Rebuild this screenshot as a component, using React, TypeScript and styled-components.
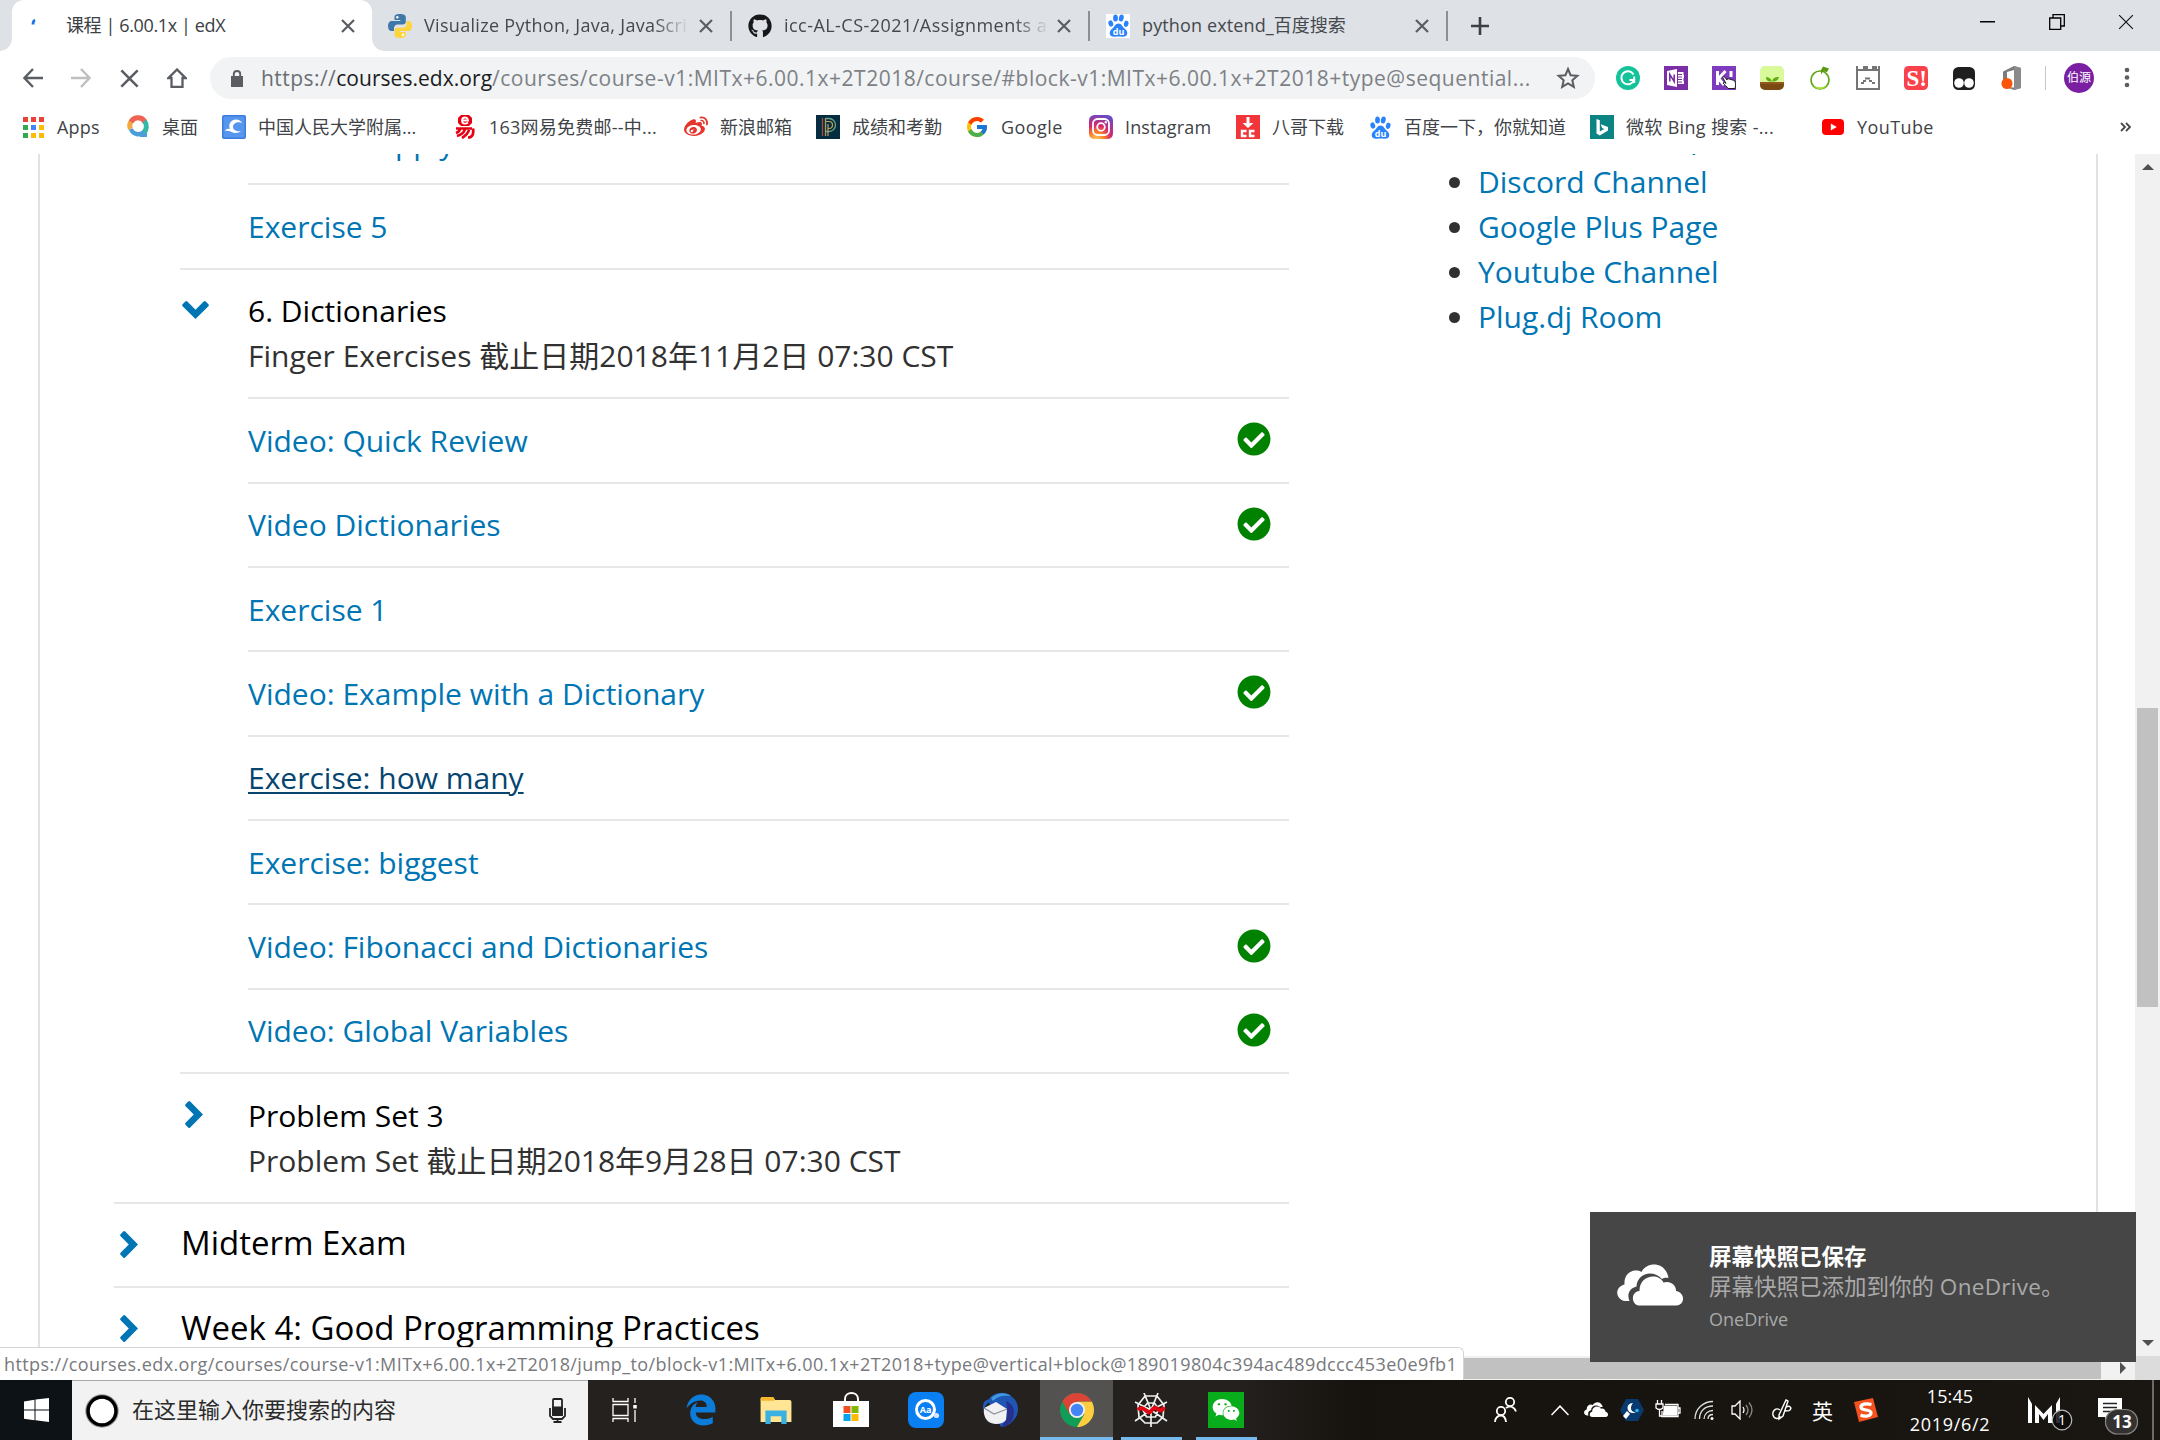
import React from "react";
import styled, { createGlobalStyle, css } from "styled-components";
import { FaCheckCircle, FaEdgeLegacy, FaGithub, FaWeibo, FaWeixin } from "react-icons/fa";
import { FcGoogle } from "react-icons/fc";

const Global = createGlobalStyle`
  * { box-sizing: border-box; }
  html, body { margin: 0; padding: 0; }
  body { width: 2160px; height: 1440px; overflow: hidden; background: #fff;
    font-family: "Open Sans", "Noto Sans CJK SC", sans-serif; }
  svg { display: block; flex: none; }
`;

const T = styled.span<{ $s?: number; $ls?: number; $c?: string; $b?: boolean }>`
  font-size: ${(p) => p.$s ?? 18}px;
  letter-spacing: ${(p) => p.$ls ?? 0}px;
  color: ${(p) => p.$c ?? "inherit"};
  font-weight: ${(p) => (p.$b ? 700 : 400)};
  white-space: pre;
`;

/* ---------- window frame ---------- */
const Screen = styled.div`
  width: 2160px; height: 1440px; display: flex; flex-direction: column; overflow: hidden; position: relative;
`;
const TabStrip = styled.div`
  height: 51px; flex: none; background: #dee1e6; display: flex; align-items: stretch; padding-left: 12px;
`;
const Tab = styled.div<{ $active?: boolean; $w: number }>`
  width: ${(p) => p.$w}px; height: 51px; display: flex; align-items: center; padding: 0 17px 0 16px; color: #45494d;
  position: relative;
  ${(p) => p.$active && css`
    background: #fff; border-radius: 12px 12px 0 0; color: #3c4043;
    &::before, &::after { content: ""; position: absolute; bottom: 0; width: 12px; height: 12px; }
    &::before { left: -12px; background: radial-gradient(circle at 0 0, #dee1e6 11.5px, #fff 12px); }
    &::after { right: -12px; background: radial-gradient(circle at 100% 0, #dee1e6 11.5px, #fff 12px); }
  `}
`;
const TabTitle = styled.div<{ $w: number; $fade?: boolean; $gap?: number }>`
  width: ${(p) => p.$w}px; margin-left: ${(p) => p.$gap ?? 12}px; overflow: hidden; white-space: nowrap; line-height: 30px;
  ${(p) => p.$fade && css`mask-image: linear-gradient(to right, #000 calc(100% - 34px), transparent);`}
`;
const TabDivider = styled.i`width: 2px; height: 30px; margin-top: 11px; background: #8c9095; flex: none;`;
const Push = styled.div`flex: 1;`;
const FavBox = styled.div<{ $bg?: string }>`
  width: 24px; height: 24px; flex: none; display: flex; align-items: center; justify-content: center;
  background: ${(p) => p.$bg ?? "transparent"};
`;
const NewTab = styled.div`width: 64px; display: flex; align-items: center; justify-content: center;`;
const Controls = styled.div`margin-left: auto; display: flex;`;
const Control = styled.div<{ $w: number }>`width: ${(p) => p.$w}px; height: 43px; display: flex; align-items: center; justify-content: center;`;

const Toolbar = styled.div`height: 54px; flex: none; display: flex; align-items: center; background: #fff; padding-left: 9px;`;
const NavBtn = styled.div`width: 48px; display: flex; justify-content: center; align-items: center;`;
const Omnibox = styled.div`
  margin-left: 9px; width: 1385px; height: 42px; border-radius: 21px; background: #f1f3f4;
  display: flex; align-items: center; padding: 0 15px 0 21px;
`;
const Url = styled.div`margin-left: 18px; line-height: 42px; height: 42px; white-space: nowrap; flex: 1;`;
const ExtRow = styled.div`display: flex; margin-left: 9px;`;
const Ext = styled.div`width: 48px; display: flex; justify-content: center;`;
const VLine = styled.i`width: 1px; height: 24px; background: #c6c9cd; margin-left: 9px;`;
const Avatar = styled.div`
  margin-left: 18px; width: 30px; height: 30px; border-radius: 50%; background: #7b1fa2; color: #fff;
  display: flex; align-items: center; justify-content: center; line-height: 1;
`;
const Menu = styled.div`margin-left: 30px; width: 6px;`;

const Bookmarks = styled.div`height: 49px; flex: none; display: flex; padding: 0 0 5px 21px; background: #fff; align-items: center; color: #404347;`;
const Bookmark = styled.div<{ $w: number }>`width: ${(p) => p.$w}px; display: flex; align-items: center; gap: 12px; white-space: nowrap; line-height: 26px;`;
const More = styled.div`margin-left: auto; padding-right: 29px;`;

/* ---------- page ---------- */
const PageRow = styled.div`height: 1202px; flex: none; display: flex; background: #fff; overflow: hidden;`;
const Page = styled.main`
  width: 2060px; margin-left: 38px; border: solid #e2e2e2; border-width: 0 2px; display: flex; align-items: flex-start; height: 1202px; overflow: hidden;
`;
const Outline = styled.ol`
  list-style: none; margin: -55px 0 0 74px; padding: 0; width: 1175px; font-size: 30px; line-height: 45px;
`;
const Line = styled.li<{ $indent: number }>`
  margin-left: ${(p) => p.$indent}px; border-top: 2px solid #e7e7e7; padding: 18.7px 18px 18.7px 0;
  display: flex; align-items: flex-start; justify-content: space-between;
`;
const Link = styled.a<{ $hover?: boolean }>`
  color: ${(p) => (p.$hover ? "#064570" : "#0075b4")}; white-space: nowrap; height: 45px;
  ${(p) => p.$hover && css`text-decoration: underline; text-decoration-thickness: 2px; text-underline-offset: 3px;`}
`;
const Twisty = styled.div<{ $w: number; $pad: number }>`
  width: ${(p) => p.$w}px; height: 44px; display: flex; align-items: center; padding-left: ${(p) => p.$pad}px; flex: none;
`;
const Heading = styled.div`flex: 1; white-space: nowrap;`;
const Title = styled.div`color: #000; height: 45px;`;
const WeekTitle = styled.div`color: #000; height: 45px; font-size: 33px; line-height: 41px;`;
const Due = styled.div`color: #313131; height: 45px;`;
const Done = styled.div`width: 34px; height: 43px; display: flex; align-items: center; font-size: 34px; color: #008100;`;

const Side = styled.ul`
  margin: -40px 0 0 160px; padding: 0; list-style: none; font-size: 30px; line-height: 45px;
`;
const SideItem = styled.li`display: flex; align-items: center; gap: 18px; height: 45px;
  &::before { content: ""; width: 11px; height: 11px; border-radius: 50%; background: #313131; margin-top: 2px; }
`;

const VScroll = styled.div`width: 25px; height: 1202px; margin-left: auto; background: #f1f1f1; display: flex; flex-direction: column; align-items: center;`;
const Arrow = styled.div<{ $dir: "up" | "down" | "right" }>`
  width: 0; height: 0; border: 6px solid transparent;
  ${(p) => p.$dir === "up" && css`border-bottom-color: #505050; border-top: 0; margin-top: 10px;`}
  ${(p) => p.$dir === "down" && css`border-top-color: #505050; border-bottom: 0; margin-top: auto; margin-bottom: 10px;`}
  ${(p) => p.$dir === "right" && css`border-left-color: #505050; border-right: 0;`}
`;
const VThumb = styled.div`width: 21px; height: 299px; background: #c1c1c1; margin-top: 538px;`;
const HScroll = styled.div`height: 24px; flex: none; display: flex; background: #f1f1f1;`;
const HThumb = styled.div`margin: 2px 0 1px 26px; width: 2075px; background: #c1c1c1;`;
const HEnd = styled.div`width: 34px; display: flex; align-items: center; padding-left: 19px;`;
const Corner = styled.div`width: 25px; background: #dcdcdc;`;

const StatusBubble = styled.div`
  position: absolute; left: 0; top: 1347px; width: 1464px; height: 33px; background: #fff; border: 1px solid #d4d4d4;
  border-left: 0; border-bottom: 0; border-top-right-radius: 6px; padding-left: 4px; line-height: 32px; color: #77797c; white-space: nowrap;
`;
const Toast = styled.div`
  position: absolute; left: 1590px; top: 1212px; width: 546px; height: 150px; background: #464646; display: flex; padding-left: 27px;
`;
const ToastIcon = styled.div`width: 66px; padding-top: 52px; margin-right: 26px;`;
const ToastText = styled.div`display: flex; flex-direction: column; padding-top: 30px; white-space: nowrap; color: #a9a9a9;`;
const ToastLine = styled.div<{ $h: number }>`height: ${(p) => p.$h}px; line-height: ${(p) => p.$h}px;`;

/* ---------- taskbar ---------- */
const Taskbar = styled.div`height: 60px; flex: none; display: flex; background: linear-gradient(to right, #25211e 0, #25211e 57%, #16130f 63%, #1a1713 100%); color: #fff;`;
const Start = styled.div`width: 72px; background: #0c1216; display: flex; align-items: center; justify-content: center;`;
const Search = styled.div`width: 516px; background: #f2f2f2; border-top: 1px solid #a9a9a9; display: flex; align-items: center; padding: 0 22px 0 13px; color: #2b2b2b;`;
const SearchText = styled.div`margin-left: 13px; flex: 1; line-height: 58px;`;
const TaskBtn = styled.div<{ $w: number; $on?: boolean; $run?: number }>`
  width: ${(p) => p.$w}px; display: flex; align-items: center; justify-content: center; position: relative;
  background: ${(p) => (p.$on ? "#545250" : "transparent")};
  ${(p) => p.$run && css`&::after { content: ""; position: absolute; bottom: 0; left: calc(50% - ${p.$run / 2}px); width: ${p.$run}px; height: 3px; background: #76b9ed; }`}
`;
const Tray = styled.div`margin-left: auto; display: flex;`;
const Cell = styled.div<{ $w: number }>`width: ${(p) => p.$w}px; display: flex; align-items: center; justify-content: center;`;
const Clock = styled.div`width: 120px; display: flex; flex-direction: column; align-items: center; padding-top: 2px; line-height: 28px;`;
const ShowDesktop = styled.div`width: 8px; border-left: 2px solid #6c6a68;`;

/* ---------- icons ---------- */
const Close = ({ s = 14, w = 2.2, c = "#5a5e62" }: { s?: number; w?: number; c?: string }) => (
  <svg width={s} height={s} viewBox="0 0 14 14" stroke={c} strokeWidth={w} fill="none"><path d="M1 1l12 12M13 1L1 13" /></svg>
);
const Python = () => (
  <svg width="24" height="24" viewBox="0 0 24 24">
    <path fill="#3f78a8" d="M12 0C8 0 6.500 1 6.500 3.300V6H12.300v1H3.800C1.300 7 0 9 0 12s1.300 5 3.500 5H6v-3c0-2 1.600-3.600 3.600-3.600h5.200c1.800 0 3-1.300 3-3V3.300C17.800 1 15.500 0 12 0z" />
    <path fill="#fdd43b" d="M12 24c4 0 5.600-1 5.600-3.300V18h-5.900v-1h8.500c2.500 0 3.800-2 3.800-5s-1.300-5-3.500-5h-2v3c0 2-1.600 3.700-3.600 3.700H9.600c-1.800 0-3 1.300-3 3v4C6.600 23 8.500 24 12 24z" />
    <circle cx="9.300" cy="3.300" r="1.200" fill="#fff" /><circle cx="15" cy="20.700" r="1.200" fill="#fff" />
  </svg>
);
const Baidu = () => (
  <svg width="21" height="23" viewBox="0 0 21 23" fill="#2b83fb">
    <ellipse cx="2.800" cy="9.500" rx="2.400" ry="3.200" transform="rotate(-15 2.800 9.500)" />
    <ellipse cx="7.500" cy="4" rx="2.400" ry="3.500" /><ellipse cx="13.300" cy="4" rx="2.400" ry="3.500" transform="rotate(12 13.300 4)" />
    <ellipse cx="18.200" cy="9.800" rx="2.300" ry="3.200" transform="rotate(12 18.200 9.800)" />
    <path d="M10.500 9.500c3 0 4 3 5.500 4.500s3.500 2.800 3.300 5.300c-.3 3-2.500 3.700-5 3.500-1.500-.1-2.500-.3-3.800-.3s-2.300.2-3.800.3c-2.500.2-4.700-.5-5-3.500-.2-2.500 1.800-3.800 3.300-5.300s2.500-4.500 5.500-4.500z" />
    <text x="10.500" y="21" fontSize="9" fontWeight="700" textAnchor="middle" fill="#fff" fontFamily="Open Sans">du</text>
  </svg>
);
const AppsGrid = () => {
  const c = ["#ea4335", "#ea4335", "#ea4335", "#34a853", "#4285f4", "#fbbc05", "#34a853", "#fbbc05", "#fbbc05"];
  return <svg width="24" height="24" viewBox="0 0 24 24">{c.map((f, i) => <rect key={i} x={2 + (i % 3) * 8} y={2 + Math.floor(i / 3) * 8} width="5" height="5" fill={f} />)}</svg>;
};
const Desk = () => (
  <svg width="24" height="24" viewBox="0 0 24 24" fill="none">
    <path d="M4.500 14a8 8 0 0 1 2-9" stroke="#f5a742" strokeWidth="5" /><path d="M5 7a8 8 0 0 1 14 0" stroke="#ef6352" strokeWidth="5" />
    <path d="M18.500 6a9 9 0 0 1-1 12" stroke="#35b8a6" strokeWidth="5" /><path d="M18 17a8 8 0 0 1-13-3" stroke="#4a9fd8" strokeWidth="4.500" /><path d="M14 18h7v4h-7z" fill="#4a9fd8" />
    <path d="M8 8l7 7M15 8l-7 7" stroke="#fff" strokeWidth="3.500" />
  </svg>
);
const School = () => (
  <svg width="24" height="24" viewBox="0 0 24 24"><rect width="24" height="24" rx="2" fill="#3b7dde" /><rect x="1.500" y="1.500" width="21" height="21" rx="1" fill="#5796ee" />
    <path d="M20 8c-3-5-10-4-12 0-1 2-1 4 0 6-3-.5-4 0-5 2 5-1 6 2 10 2 3 0 5-1 6-2-4 1-8-1-8-4 0-4 5-6 9-4z" fill="#fff" /></svg>
);
const NetEase = () => (
  <svg width="24" height="24" viewBox="0 0 24 24" fill="none" stroke="#e60012" strokeWidth="2">
    <path d="M8 0h8l3 3v5l-3 3H8L5 8V3z" fill="#e60012" stroke="none" /><path d="M9 5.500h6c0-4-6-4-6 0s4 3.500 6 2" stroke="#fff" strokeWidth="1.800" />
    <path d="M3 13.500h16M7 13c0 3-1 4-4 5M12 14c-1 4-4 6-8 7M16 15c-1 4-4 6-7 8M20 13.500c1 6-1 9-5 9" strokeWidth="2.700" /></svg>
);
const PowerSchool = () => (
  <svg width="24" height="24" viewBox="0 0 24 24" fill="none"><rect width="24" height="24" fill="#062c40" /><path d="M6.500 3v18" stroke="#b3463c" strokeWidth="1.300" /><path d="M9.500 21V3" stroke="#9aa36a" strokeWidth="1.300" />
    <path d="M10 3.500h3a6 6 0 0 1 0 13h-3" stroke="#6ea58a" strokeWidth="1.300" /><path d="M10 6.500h3a3.500 3.500 0 0 1 0 7h-1M12 21V9" stroke="#c5a153" strokeWidth="1.200" /></svg>
);
const Instagram = () => (
  <svg width="24" height="24" viewBox="0 0 24 24" fill="none"><defs><radialGradient id="ig" cx=".3" cy="1.050" r="1.150"><stop offset="0" stopColor="#fed361" /><stop offset=".3" stopColor="#fa7e2b" /><stop offset=".55" stopColor="#d6276d" /><stop offset="1" stopColor="#5b4fd0" /></radialGradient></defs>
    <rect width="24" height="24" rx="5.500" fill="url(#ig)" /><rect x="4" y="4" width="16" height="16" rx="4.500" stroke="#fff" strokeWidth="1.800" /><circle cx="12" cy="12" r="3.800" stroke="#fff" strokeWidth="1.800" /><circle cx="16.800" cy="7.200" r="1.200" fill="#fff" /></svg>
);
const Bage = () => (
  <svg width="24" height="24" viewBox="0 0 24 24"><rect width="24" height="24" fill="#f2353a" /><path d="M10.500 2h3v6h4L12 13 6.500 8h4z" fill="#fff" /><path d="M10.500 16H6v5h4.500M18.500 16H14v5h4.500" stroke="#fff" strokeWidth="2.400" fill="none" /></svg>
);
const Bing = () => (
  <svg width="24" height="24" viewBox="0 0 24 24"><rect width="24" height="24" fill="#0c8484" /><path d="M6.500 4l3.300 1.200v11.300l4.500-2.600-2.200-1-1.400-3.600 7.300 2.600v3.600L9.800 20.500 6.500 18.600z" fill="#fff" /></svg>
);
const YouTube = () => (
  <svg width="24" height="24" viewBox="0 0 24 24"><rect x="1" y="4" width="22" height="16" rx="4" fill="#f00" /><path d="M9.800 8.500v7l6-3.500z" fill="#fff" /></svg>
);
const Ext1 = () => <svg width="24" height="24" viewBox="0 0 24 24" fill="none"><circle cx="12" cy="12" r="12" fill="#15c39a" /><path d="M17.500 8.500A6.500 6.500 0 1 0 18 14h-4.500M18.200 10.500V17" stroke="#fff" strokeWidth="2" /></svg>;
const Ext2 = () => <svg width="24" height="24" viewBox="0 0 24 24"><rect width="24" height="24" fill="#7b2fa6" /><path d="M3 5l10-2v18L3 19z" fill="#fff" /><path d="M14 6h6v12h-6z" fill="#fff" /><path d="M14 8.500h4M14 11h4M14 13.500h4M14 16h4M20 6v3m0 3v3" stroke="#7b2fa6" strokeWidth="1" /><path d="M5.800 15.500v-7l4.400 7v-7" stroke="#7b2fa6" strokeWidth="1.600" fill="none" /></svg>;
const Ext3 = () => <svg width="24" height="24" viewBox="0 0 24 24"><rect width="24" height="24" fill="#7f3bbd" /><path d="M5.500 5v14M13.500 5l-7 7.500L12 19M19 5v6" stroke="#fff" strokeWidth="3" fill="none" /><path d="M10.500 11c1-1 2-.5 3 1l1.500 2 .5-1.500 7 2c1 2 1.500 4 .5 8h-7c-1-2-4-4-5-5.500 1-1 2-.500 3 .5z" fill="#fff" stroke="#222" strokeWidth="1" /></svg>;
const Ext4 = () => <svg width="24" height="24" viewBox="0 0 24 24"><defs><clipPath id="e4"><rect width="24" height="24" rx="5" /></clipPath></defs><g clipPath="url(#e4)"><rect width="24" height="24" fill="#d9f99a" /><rect y="16" width="24" height="8" fill="#7a4a12" /><rect y="16" width="24" height="2" fill="#8f5a1c" /></g><path d="M12 17.500c0-3-1-6-6-6.500 0 4 3 5 6 4.500C15 15.500 18 15 19 11c-4 0-6.500 1-7 5" fill="#5fae12" /></svg>;
const Ext5 = () => <svg width="24" height="24" viewBox="0 0 24 24" fill="none"><circle cx="12" cy="14" r="9" stroke="#62a317" strokeWidth="1.700" /><path d="M5 19c4 3 10 3 14 0-2 3-4 4.300-7 4.300S7 22 5 19z" fill="#a6e03a" /><path d="M13 4l2-3.500 6 2-2 3.500-4-.500-2 3z" fill="#5a9a15" /></svg>;
const Ext6 = () => <svg width="24" height="24" viewBox="0 0 24 24" fill="none" stroke="#757575"><path d="M1 0v23h22V0M1 4h22" strokeWidth="2" /><path d="M7 1h5M16 1h5" strokeWidth="4" /><path d="M5 17h3M7 15h3M9 12.500h5M13 15h3M16 17h3" strokeWidth="2" /></svg>;
const Ext7 = () => <svg width="24" height="24" viewBox="0 0 24 24"><rect width="24" height="24" rx="4.500" fill="#f9424b" /><text x="2.500" y="20" fontSize="23" fontWeight="700" fill="#fff" fontFamily="Liberation Serif">S!</text></svg>;
const Ext8 = () => <svg width="24" height="24" viewBox="0 0 24 24"><rect x="1" y="1" width="22" height="23" rx="5.500" fill="#1f1f1f" /><circle cx="7" cy="17" r="4.800" fill="#fff" /><circle cx="17" cy="17" r="4.800" fill="#fff" /></svg>;
const Ext9 = () => <svg width="24" height="24" viewBox="0 0 24 24"><path d="M3 5.500L14 0l7 2v20l-7 2-8-3 8 .5V4L7 6v10l-4 2z" fill="#7c7c7c" /><path d="M14 0l7 2v20l-7 2z" fill="#8b8b8b" /><circle cx="7" cy="17.500" r="5.500" fill="#fb5607" /></svg>;
const EXTENSIONS = [Ext1, Ext2, Ext3, Ext4, Ext5, Ext6, Ext7, Ext8, Ext9];

const Chevron = ({ down }: { down?: boolean }) => down
  ? <svg width="27" height="18" viewBox="0 0 27 18"><path d="M13.500 18L.6 5.200q-1-1 0-2L3.300.6q1-1 2 0l8.200 8.200L21.700.6q1-1 2 0l2.700 2.600q1 1 0 2z" fill="#0075b4" /></svg>
  : <svg width="18" height="27" viewBox="0 0 18 27"><path d="M18 13.500L5.200 26.400q-1 1-2 0L.6 23.700q-1-1 0-2l8.200-8.200L.6 5.300q-1-1 0-2L3.200.6q1-1 2 0z" fill="#0075b4" /></svg>;

const Clouds = ({ w }: { w: number }) => (
  <svg width={w} height={w * 0.63} viewBox="0 0 66 41.500" fill="#fff">
    <path d="M12.500 37H8C-1.500 35-3 23.500 7.500 20.500 6.500 8 18 4 24.500 8 30-3 49-2.500 51.500 14 48.500 13.500 46.500 14 45 15 35 4.500 20 10 19.500 22.500 11.500 24.500 10 31.500 12.500 37z" />
    <path d="M22 41.500c-8-1-8.500-13.500.500-14.500-.5-15.500 18.500-19 24-8.500 6.500-2.500 13 2.500 12.500 8.500 9 1.500 9.500 13 1 14.500z" />
  </svg>
);
const Chrome = () => (
  <svg width="34" height="34" viewBox="0 0 34 34"><circle cx="17" cy="17" r="17" fill="#0f9d58" /><path d="M31.700 8.500A17 17 0 0 1 17 34l7.400-12.700L17 8.500z" fill="#ffcd40" /><path d="M2.300 8.500A17 17 0 0 1 31.700 8.500H17v8.500l-7.400 4.200z" fill="#db4437" />
    <circle cx="17" cy="17" r="8" fill="#f1f1f1" /><circle cx="17" cy="17" r="6.200" fill="#4285f4" /></svg>
);
const Explorer = () => <svg width="32" height="27" viewBox="0 0 32 28"><path d="M0 2a2 2 0 0 1 2-2h11l2 3h15a2 2 0 0 1 2 2v21H0z" fill="#ffe594" /><path d="M0 4V2a2 2 0 0 1 2-2h11l2 3-1 1H0z" fill="#f4b62b" /><path d="M5 28V14h22v14h-5.500v-8h-11v8z" fill="#3bb1e3" /></svg>;
const Store = () => <svg width="36" height="36" viewBox="0 0 36 36"><path d="M12 11V7c0-8 13-8 13 0v4" stroke="#fff" strokeWidth="2" fill="none" /><path d="M0 9h36v26H0z" fill="#fff" /><path d="M10.500 14h7v7h-7z" fill="#f25022" /><path d="M18.500 14h7v7h-7z" fill="#7fba00" /><path d="M10.500 22h7v7h-7z" fill="#00a4ef" /><path d="M18.500 22h7v7h-7z" fill="#ffb900" /></svg>;
const Dict = () => <svg width="36" height="36" viewBox="0 0 36 36"><rect width="36" height="36" rx="8" fill="#0a7ff2" /><circle cx="17.500" cy="17.500" r="9" stroke="#fff" strokeWidth="3" fill="none" /><circle cx="28.500" cy="23.500" r="2.600" fill="#cfe6ff" /><text x="17.500" y="21" fontSize="9" fontWeight="700" textAnchor="middle" fill="#fff" fontFamily="Open Sans">Aa</text></svg>;
const Bird = () => <svg width="36" height="36" viewBox="0 0 36 36"><path d="M6 9C9 1 22-2 29 4c9 6 9 18 2 25-4 4-8 6-12 6z" fill="#1f56b5" /><path d="M9 6C15 0 24 0 29 4c-7-1-14 0-18 5z" fill="#3f9be0" /><path d="M24 9c8 3 10 11 6 20-3 3-7 6-11 6 5-6 8-12 5-26z" fill="#27308f" /><path d="M2 16l12-6 11 7-1 11c-3 4-10 5-15 3-6-2-8-10-7-15z" fill="#f1f1f3" /><path d="M2 16l10 6 13-5" stroke="#8d93a2" strokeWidth="1.200" fill="none" /><path d="M1 18C0 9 5 6 9 8l-5 5z" fill="#235cb8" /></svg>;
const Spyder = () => <svg width="34" height="34" viewBox="0 0 34 34" fill="none"><path d="M11 3h12l7 9-1 12-6 6H11l-6-6-1-12zM13.500 10h7l4 6-3 8h-9l-4-8zM17 17L10 0M17 17l7-17M17 17l16-8M17 17l16 11M17 17v17M17 17L1 28M17 17L1 9" stroke="#f0f0f0" strokeWidth="1.700" /><path d="M4 17c4-4 7 0 10 2s5-6 8-4 5 5 8-1" stroke="#e30613" strokeWidth="4" /></svg>;

const People = () => <svg width="24" height="26" viewBox="0 0 24 26" fill="none" stroke="#fff" strokeWidth="1.800"><circle cx="16" cy="5" r="4.200" /><circle cx="7" cy="14" r="4.200" /><path d="M1 25c0-4 3-6.500 6-6.500s4.500 2.500 5 6.500M12 11c3-2.500 8-2 10 3.500" /></svg>;
const Tool = () => <svg width="24" height="22" viewBox="0 0 24 22"><path d="M6 0h12l6 11-6 11H6L0 11z" fill="#08396f" /><path d="M13 4c-4 0-6.500 3-5 7 1 3 5 4 8 2-3 .5-5-1-5-4 0-2 1-4 2-5zM7 12l3 3-4 5-3-3z" fill="#fff" /><circle cx="17" cy="11.500" r="1.800" fill="#29b6e8" /></svg>;
const Battery = () => <svg width="26" height="20" viewBox="0 0 26 20" fill="none" stroke="#fff" strokeWidth="1.300"><path d="M10 4.500h13v12H7V11M23 8h2v5h-2" /><path d="M9.500 6.500H21.500v8.500H8.500z" fill="#fff" /><path d="M2.500 0v4M6.500 0v4M1 4h7v4q-3.500 3-7 0zM4.500 9v7H7" /></svg>;
const Wifi = () => <svg width="20" height="20" viewBox="0 0 20 20" fill="none" stroke="#e0e0e0" strokeWidth="1.300"><path d="M1 19C1 9 9 1.500 19 1.500M5.500 19C5.500 11 11 6 19 6M10 19c0-5 4-8.500 9-8.500M14 19c0-3 2-4.500 5-4.500" /><circle cx="18" cy="18.500" r="1.500" fill="#fff" stroke="none" /></svg>;
const Volume = () => <svg width="22" height="20" viewBox="0 0 22 20" fill="none" stroke="#fff" strokeWidth="1.300"><path d="M1 6h3l5-5v18l-5-5H1zM12 7q2 3 0 6" /><path d="M15 5q4 5 0 10M18 2.500q6 7.500 0 15" stroke="#8a8886" /></svg>;
const Pen = () => <svg width="22" height="22" viewBox="0 0 22 22" fill="none" stroke="#fff" strokeWidth="1.400"><path d="M15 1l2 1-5 15-4 3 0-4zM9 11c-4-3-8 1-7 5s6 5 7 1M15 8c4-2 6 1 4 3s-3 0-5 1" /></svg>;
const Sogou = () => <svg width="24" height="24" viewBox="0 0 24 24" fill="none"><path d="M0 4L19 0l5 19L5 24z" fill="#f4511e" /><path d="M17.500 6.500C12 5 6.500 6 7 9.500s9.500 1.500 10 5-6 4.500-10.500 2.500" stroke="#fff" strokeWidth="3.200" /></svg>;
const MBadge = () => <svg width="60" height="60" viewBox="0 0 60 60"><path d="M14 17l4 7v19h-4zM21 43V25l8.500 9 8.500-9v18h-4V34l-4.500 6-4.500-6v9zM42 24l4-7v26h-4z" fill="#fff" /><circle cx="48" cy="40" r="9.800" fill="#0d0c0b" fillOpacity="0.850" stroke="#bbb" strokeWidth="1.200" /><text x="48" y="45" fontSize="14" textAnchor="middle" fill="#fff" fontFamily="Open Sans">1</text></svg>;
const Action = () => <svg width="48" height="60" viewBox="0 0 48 60"><path d="M7 18h24v19H19l-5 5v-5H7z" fill="#fff" /><path d="M12 23.500h14M12 27.500h14M12 31.500h9" stroke="#222" strokeWidth="1.300" /><rect x="14.500" y="29.500" width="32" height="24.500" rx="12" fill="#343230" stroke="#8a8886" strokeWidth="1.200" /><text x="31" y="48" fontSize="17" fontWeight="700" textAnchor="middle" fill="#fff" fontFamily="Open Sans">13</text></svg>;

/* ---------- data ---------- */
type Unit = { title: string; done?: boolean; hover?: boolean };
const UNITS: Unit[] = [
  { title: "Video: Quick Review", done: true },
  { title: "Video Dictionaries", done: true },
  { title: "Exercise 1" },
  { title: "Video: Example with a Dictionary", done: true },
  { title: "Exercise: how many", hover: true },
  { title: "Exercise: biggest" },
  { title: "Video: Fibonacci and Dictionaries", done: true },
  { title: "Video: Global Variables", done: true },
];
const LINKS = ["Facebook Group", "Discord Channel", "Google Plus Page", "Youtube Channel", "Plug.dj Room"];

const UnitLine = ({ title, done, hover }: Unit) => (
  <Line $indent={134}><Link $hover={hover}>{title}</Link>{done && <Done><FaCheckCircle /></Done>}</Line>
);
const Section = ({ title, due, open }: { title: string; due: string; open?: boolean }) => (
  <Line $indent={66}>
    <Twisty $w={68} $pad={open ? 2 : 5}><Chevron down={open} /></Twisty>
    <Heading><Title>{title}</Title><Due>{due}</Due></Heading>
  </Line>
);
const Week = ({ title }: { title: string }) => (
  <Line $indent={0}><Twisty $w={67} $pad={6}><Chevron /></Twisty><WeekTitle>{title}</WeekTitle><Push /></Line>
);

export default function App() {
  return (
    <>
      <Global />
      <Screen>
        <TabStrip>
          <Tab $active $w={360}>
            <FavBox><svg width="24" height="24" viewBox="0 0 24 24"><path d="M7 6q-2 1-2 4.500" stroke="#1a73e8" strokeWidth="2.800" fill="none" /></svg></FavBox>
            <TabTitle $w={260} $gap={14}><T $ls={-0.38}>课程 | 6.00.1x | edX</T></TabTitle><Push /><Close />
          </Tab>
          <Tab $w={358}><FavBox><Python /></FavBox><TabTitle $w={265} $fade><T $ls={0.31}>Visualize Python, Java, JavaScri</T></TabTitle><Push /><Close /></Tab>
          <TabDivider />
          <Tab $w={356}><FavBox><FaGithub size={24} color="#16181a" /></FavBox><TabTitle $w={265} $fade><T $ls={0.46}>icc-AL-CS-2021/Assignments a</T></TabTitle><Push /><Close /></Tab>
          <TabDivider />
          <Tab $w={356}><FavBox $bg="#fff"><Baidu /></FavBox><TabTitle $w={265}><T $ls={0.13}>python extend_</T><T>百度搜索</T></TabTitle><Push /><Close /></Tab>
          <TabDivider />
          <NewTab><svg width="18" height="18" viewBox="0 0 18 18"><path d="M9 0v18M0 9h18" stroke="#3c4043" strokeWidth="2.600" /></svg></NewTab>
          <Controls>
            <Control $w={69}><svg width="15" height="2"><path d="M0 0h15v1.500H0z" fill="#000" /></svg></Control>
            <Control $w={69}><svg width="16" height="16" viewBox="0 0 16 16" fill="none" stroke="#000" strokeWidth="1.300"><path d="M.7 4h11v11.300H.7zM4 4V.7h11.300V12H12" /></svg></Control>
            <Control $w={69}><Close s={16} w={1} c="#111" /></Control>
          </Controls>
        </TabStrip>

        <Toolbar>
          <NavBtn><svg width="20" height="20" viewBox="0 0 20 20" fill="none" stroke="#5a5e62" strokeWidth="2.400"><path d="M20 10H2M10 1L1.500 10l8.500 9" /></svg></NavBtn>
          <NavBtn><svg width="20" height="20" viewBox="0 0 20 20" fill="none" stroke="#bdbfc1" strokeWidth="2.400"><path d="M0 10h18M10 1l8.500 9-8.500 9" /></svg></NavBtn>
          <NavBtn><Close s={19} w={1.900} /></NavBtn>
          <NavBtn><svg width="20" height="20" viewBox="0 0 20 20" fill="none" stroke="#5a5e62" strokeWidth="2.300"><path d="M10 1.500L1.500 10H4.500v8.800h11V10h3z" /></svg></NavBtn>
          <Omnibox>
            <svg width="12" height="17" viewBox="0 0 12 17"><path d="M0 6h12v11H0z" fill="#5a5e62" /><path d="M2.800 7V4q0-3 3.200-3t3.200 3v3" fill="none" stroke="#5a5e62" strokeWidth="1.900" /></svg>
            <Url>
              <T $s={21} $ls={0.45} $c="#6b6f74">https://</T>
              <T $s={21} $ls={0.04} $c="#1b1c1e">courses.edx.org</T>
              <T $s={21} $ls={0.5} $c="#7d8186">/courses/course-v1:MITx+6.00.1x+2T2018/course/#block-v1:MITx+6.00.1x+2T2018+type@sequential...</T>
            </Url>
            <svg width="24" height="24" viewBox="0 0 24 24" fill="none" stroke="#5a5e62" strokeWidth="2"><path d="M12 3l2.600 6.200 6.800.6-5.100 4.500 1.500 6.600L12 17.400l-5.800 3.500 1.500-6.600-5.100-4.500 6.800-.6z" /></svg>
          </Omnibox>
          <ExtRow>{EXTENSIONS.map((E, i) => <Ext key={i}><E /></Ext>)}</ExtRow>
          <VLine />
          <Avatar><T $s={12}>伯源</T></Avatar>
          <Menu><svg width="6" height="24" viewBox="0 0 6 24" fill="#5a5e62"><circle cx="3" cy="4" r="2.300" /><circle cx="3" cy="11.500" r="2.300" /><circle cx="3" cy="19" r="2.300" /></svg></Menu>
        </Toolbar>

        <Bookmarks>
          <Bookmark $w={105}><AppsGrid /><T $ls={0.2}>Apps</T></Bookmark>
          <Bookmark $w={96}><Desk /><T>桌面</T></Bookmark>
          <Bookmark $w={231}><School /><T>中国人民大学附属...</T></Bookmark>
          <Bookmark $w={231}><NetEase /><T $ls={0.24}>163网易免费邮--中...</T></Bookmark>
          <Bookmark $w={132}><FaWeibo size={24} color="#e6352c" /><T>新浪邮箱</T></Bookmark>
          <Bookmark $w={149}><PowerSchool /><T>成绩和考勤</T></Bookmark>
          <Bookmark $w={124}><FcGoogle size={24} /><T $ls={0.45}>Google</T></Bookmark>
          <Bookmark $w={147}><Instagram /><T $ls={0.15}>Instagram</T></Bookmark>
          <Bookmark $w={132}><Bage /><T>八哥下载</T></Bookmark>
          <Bookmark $w={222}><FavBox><Baidu /></FavBox><T>百度一下，你就知道</T></Bookmark>
          <Bookmark $w={231}><Bing /><T $ls={0.33}>微软 Bing 搜索 -...</T></Bookmark>
          <Bookmark $w={150}><YouTube /><T $ls={0.4}>YouTube</T></Bookmark>
          <More><svg width="11" height="10" viewBox="0 0 11 10" fill="none" stroke="#45494d" strokeWidth="1.800"><path d="M1 1l4 4-4 4M6 1l4 4-4 4" /></svg></More>
        </Bookmarks>

        <PageRow>
          <Page>
            <Outline>
              <UnitLine title="Exercise: apply to each" />
              <UnitLine title="Exercise 5" />
              <Section open title="6. Dictionaries" due="Finger Exercises 截止日期2018年11月2日 07:30 CST" />
              {UNITS.map((u) => <UnitLine key={u.title} {...u} />)}
              <Section title="Problem Set 3" due="Problem Set 截止日期2018年9月28日 07:30 CST" />
              <Week title="Midterm Exam" />
              <Week title="Week 4: Good Programming Practices" />
            </Outline>
            <Side>{LINKS.map((l) => <SideItem key={l}><Link>{l}</Link></SideItem>)}</Side>
          </Page>
          <VScroll><Arrow $dir="up" /><VThumb /><Arrow $dir="down" /></VScroll>
        </PageRow>
        <HScroll><HThumb /><HEnd><Arrow $dir="right" /></HEnd><Corner /></HScroll>

        <Taskbar>
          <Start><svg width="25" height="24" viewBox="0 0 25 24" fill="#fff"><path d="M0 3.500l10.500-1.700v9.700H0zM11.500 1.600L25 0v11.500H11.500zM0 12.500h10.500v9.700L0 20.700zM11.500 12.500H25V24l-13.500-1.800z" /></svg></Start>
          <Search>
            <svg width="34" height="34" viewBox="0 0 34 34"><circle cx="17" cy="17" r="14.500" fill="#fff" stroke="#9a9a9a" strokeWidth="4.500" /><circle cx="17" cy="17" r="14" fill="none" stroke="#000" strokeWidth="3.400" /></svg>
            <SearchText><T $s={22}>在这里输入你要搜索的内容</T></SearchText>
            <svg width="17" height="25" viewBox="0 0 17 25" fill="none" stroke="#222" strokeWidth="1.800"><rect x="4" y="1" width="9" height="16" rx="1" /><path d="M4 9.500h9V17H4z" fill="#222" /><path d="M1 10v8l3 3h9l3-3v-8M8.500 21v3M4.500 24h8" /></svg>
          </Search>
          <TaskBtn $w={72}><svg width="25" height="24" viewBox="0 0 25 24" fill="none" stroke="#fff" strokeWidth="1.300"><path d="M1 0v3.500h15V0M1 24v-3.500h15V24M1 6.500h15v11H1zM23 0v5M23 12v12" /><path d="M23 7v3.500" strokeWidth="3.500" /></svg></TaskBtn>
          <TaskBtn $w={82}><FaEdgeLegacy size={32} color="#0c7cdb" /></TaskBtn>
          <TaskBtn $w={67}><Explorer /></TaskBtn>
          <TaskBtn $w={83}><Store /></TaskBtn>
          <TaskBtn $w={67}><Dict /></TaskBtn>
          <TaskBtn $w={81}><Bird /></TaskBtn>
          <TaskBtn $w={73} $on $run={73}><Chrome /></TaskBtn>
          <TaskBtn $w={76} $run={61}><Spyder /></TaskBtn>
          <TaskBtn $w={74} $run={61}><svg width="36" height="36" viewBox="0 0 36 36"><rect width="36" height="36" fill="#09ad1c" /><g transform="translate(4 4)"><FaWeixin size={28} color="#fff" /></g></svg></TaskBtn>
          <Tray>
            <Cell $w={36}><People /></Cell><Cell $w={18} />
            <Cell $w={36}><svg width="18" height="11" viewBox="0 0 18 11" fill="none" stroke="#fff" strokeWidth="1.500"><path d="M.5 10L9 1.200 17.500 10" /></svg></Cell>
            <Cell $w={36}><Clouds w={24} /></Cell><Cell $w={36}><Tool /></Cell><Cell $w={36}><Battery /></Cell>
            <Cell $w={36}><Wifi /></Cell><Cell $w={39}><Volume /></Cell><Cell $w={42}><Pen /></Cell>
            <Cell $w={39}><T $s={21}>英</T></Cell><Cell $w={48}><Sogou /></Cell>
            <Clock><T $ls={0.1}>15:45</T><T $ls={0.7}>2019/6/2</T></Clock>
            <Cell $w={68}><MBadge /></Cell><Cell $w={74}><Action /></Cell><ShowDesktop />
          </Tray>
        </Taskbar>

        <StatusBubble><T $ls={0.405}>https://courses.edx.org/courses/course-v1:MITx+6.00.1x+2T2018/jump_to/block-v1:MITx+6.00.1x+2T2018+type@vertical+block@189019804c394ac489dccc453e0e9fb1</T></StatusBubble>
        <Toast>
          <ToastIcon><Clouds w={66} /></ToastIcon>
          <ToastText>
            <ToastLine $h={30}><T $s={22.500} $b $c="#fff">屏幕快照已保存</T></ToastLine>
            <ToastLine $h={30}><T $s={22.500}>屏幕快照已添加到你的 </T><T $s={22.500} $ls={0.3}>OneDrive。</T></ToastLine>
            <ToastLine $h={34}><T>OneDrive</T></ToastLine>
          </ToastText>
        </Toast>
      </Screen>
    </>
  );
}
